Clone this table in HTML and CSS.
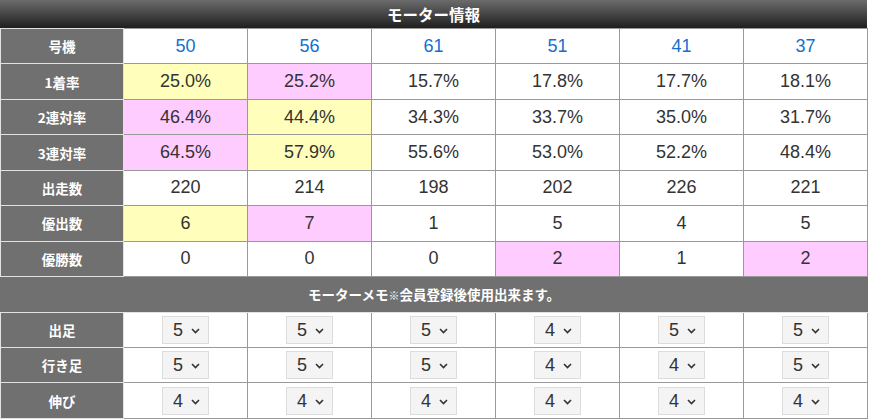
FILE: index.html
```html
<!DOCTYPE html>
<html lang="ja">
<head>
<meta charset="utf-8">
<title>モーター情報</title>
<link rel="stylesheet" href="styles.css">
</head>
<body>
<div class="motor">
  <h2 class="motor-title">モーター情報</h2>
  <table class="motor-table">
    <colgroup>
      <col class="col-head"><col class="col-data"><col class="col-data"><col class="col-data"><col class="col-data"><col class="col-data"><col class="col-data">
    </colgroup>
    <tbody>
      <tr>
        <th>号機</th>
        <td><a class="num-link" href="#">50</a></td>
        <td><a class="num-link" href="#">56</a></td>
        <td><a class="num-link" href="#">61</a></td>
        <td><a class="num-link" href="#">51</a></td>
        <td><a class="num-link" href="#">41</a></td>
        <td><a class="num-link" href="#">37</a></td>
      </tr>
      <tr>
        <th>1着率</th>
        <td class="hl-yellow">25.0%</td>
        <td class="hl-pink">25.2%</td>
        <td>15.7%</td>
        <td>17.8%</td>
        <td>17.7%</td>
        <td>18.1%</td>
      </tr>
      <tr>
        <th>2連対率</th>
        <td class="hl-pink">46.4%</td>
        <td class="hl-yellow">44.4%</td>
        <td>34.3%</td>
        <td>33.7%</td>
        <td>35.0%</td>
        <td>31.7%</td>
      </tr>
      <tr>
        <th>3連対率</th>
        <td class="hl-pink">64.5%</td>
        <td class="hl-yellow">57.9%</td>
        <td>55.6%</td>
        <td>53.0%</td>
        <td>52.2%</td>
        <td>48.4%</td>
      </tr>
      <tr>
        <th>出走数</th>
        <td>220</td>
        <td>214</td>
        <td>198</td>
        <td>202</td>
        <td>226</td>
        <td>221</td>
      </tr>
      <tr>
        <th>優出数</th>
        <td class="hl-yellow">6</td>
        <td class="hl-pink">7</td>
        <td>1</td>
        <td>5</td>
        <td>4</td>
        <td>5</td>
      </tr>
      <tr>
        <th>優勝数</th>
        <td>0</td>
        <td>0</td>
        <td>0</td>
        <td class="hl-pink">2</td>
        <td>1</td>
        <td class="hl-pink">2</td>
      </tr>
      <tr>
        <th class="memo-head" colspan="7">モーターメモ<span class="memo-note">※</span>会員登録後使用出来ます。</th>
      </tr>
      <tr>
        <th>出足</th>
        <td><span class="sel"><select><option>5</option></select><svg class="chev" viewBox="0 0 9 6"><path d="M1 1 L4.5 4.5 L8 1" /></svg></span></td>
        <td><span class="sel"><select><option>5</option></select><svg class="chev" viewBox="0 0 9 6"><path d="M1 1 L4.5 4.5 L8 1" /></svg></span></td>
        <td><span class="sel"><select><option>5</option></select><svg class="chev" viewBox="0 0 9 6"><path d="M1 1 L4.5 4.5 L8 1" /></svg></span></td>
        <td><span class="sel"><select><option>4</option></select><svg class="chev" viewBox="0 0 9 6"><path d="M1 1 L4.5 4.5 L8 1" /></svg></span></td>
        <td><span class="sel"><select><option>5</option></select><svg class="chev" viewBox="0 0 9 6"><path d="M1 1 L4.5 4.5 L8 1" /></svg></span></td>
        <td><span class="sel"><select><option>5</option></select><svg class="chev" viewBox="0 0 9 6"><path d="M1 1 L4.5 4.5 L8 1" /></svg></span></td>
      </tr>
      <tr>
        <th>行き足</th>
        <td><span class="sel"><select><option>5</option></select><svg class="chev" viewBox="0 0 9 6"><path d="M1 1 L4.5 4.5 L8 1" /></svg></span></td>
        <td><span class="sel"><select><option>5</option></select><svg class="chev" viewBox="0 0 9 6"><path d="M1 1 L4.5 4.5 L8 1" /></svg></span></td>
        <td><span class="sel"><select><option>5</option></select><svg class="chev" viewBox="0 0 9 6"><path d="M1 1 L4.5 4.5 L8 1" /></svg></span></td>
        <td><span class="sel"><select><option>4</option></select><svg class="chev" viewBox="0 0 9 6"><path d="M1 1 L4.5 4.5 L8 1" /></svg></span></td>
        <td><span class="sel"><select><option>4</option></select><svg class="chev" viewBox="0 0 9 6"><path d="M1 1 L4.5 4.5 L8 1" /></svg></span></td>
        <td><span class="sel"><select><option>5</option></select><svg class="chev" viewBox="0 0 9 6"><path d="M1 1 L4.5 4.5 L8 1" /></svg></span></td>
      </tr>
      <tr>
        <th>伸び</th>
        <td><span class="sel"><select><option>4</option></select><svg class="chev" viewBox="0 0 9 6"><path d="M1 1 L4.5 4.5 L8 1" /></svg></span></td>
        <td><span class="sel"><select><option>4</option></select><svg class="chev" viewBox="0 0 9 6"><path d="M1 1 L4.5 4.5 L8 1" /></svg></span></td>
        <td><span class="sel"><select><option>4</option></select><svg class="chev" viewBox="0 0 9 6"><path d="M1 1 L4.5 4.5 L8 1" /></svg></span></td>
        <td><span class="sel"><select><option>4</option></select><svg class="chev" viewBox="0 0 9 6"><path d="M1 1 L4.5 4.5 L8 1" /></svg></span></td>
        <td><span class="sel"><select><option>4</option></select><svg class="chev" viewBox="0 0 9 6"><path d="M1 1 L4.5 4.5 L8 1" /></svg></span></td>
        <td><span class="sel"><select><option>4</option></select><svg class="chev" viewBox="0 0 9 6"><path d="M1 1 L4.5 4.5 L8 1" /></svg></span></td>
      </tr>
    </tbody>
  </table>
</div>
</body>
</html>
```
FILE: styles.css
```css
* { box-sizing: border-box; }

body {
  margin: 0;
  background: #fff;
  font-family: "Liberation Sans", "Noto Sans CJK JP", sans-serif;
}

.motor {
  width: 867px;
}

.motor-title {
  margin: 0;
  height: 28px;
  line-height: 28px;
  text-align: center;
  color: #fff;
  font-size: 15.5px;
  font-weight: bold;
  font-family: "Noto Sans CJK JP", sans-serif;
  background: linear-gradient(#6b6b6b, #1f1f1f);
}

.motor-table {
  width: 867px;
  table-layout: fixed;
  border-collapse: collapse;
}

.col-head { width: 123px; }
.col-data { width: 124px; }

.motor-table tr {
  height: 35.45px;
}

.motor-table th {
  background: #707070;
  color: #fff;
  font-family: "Noto Sans CJK JP", sans-serif;
  font-size: 13.5px;
  font-weight: bold;
  border: 1px solid #e2e2e2;
  padding: 0;
  text-align: center;
}

.motor-table td {
  border: 1px solid #999;
  padding: 0;
  text-align: center;
  color: #333;
  font-size: 18px;
  background: #fff;
}

.motor-table .memo-head {
  border-left-color: #707070;
  border-right-color: #707070;
}

.memo-note {
  font-size: 11px;
}

.num-link {
  color: #1470cf;
  text-decoration: none;
}

.hl-yellow { background: #ffffbb !important; }
.hl-pink { background: #ffccff !important; }

.sel {
  position: relative;
  display: inline-block;
  vertical-align: middle;
}

.sel select {
  display: block;
  appearance: none;
  -webkit-appearance: none;
  width: 47px;
  height: 28px;
  padding: 0 0 0 10px;
  margin: 0;
  border: 1px solid #dcdcdc;
  border-radius: 0;
  background: #f4f4f4;
  color: #333;
  font-family: "Liberation Sans", sans-serif;
  font-size: 18px;
  text-align: left;
}

.chev {
  position: absolute;
  left: 29px;
  top: 12px;
  width: 9px;
  height: 6px;
  fill: none;
  stroke: #333;
  stroke-width: 1.6;
  pointer-events: none;
}
```
